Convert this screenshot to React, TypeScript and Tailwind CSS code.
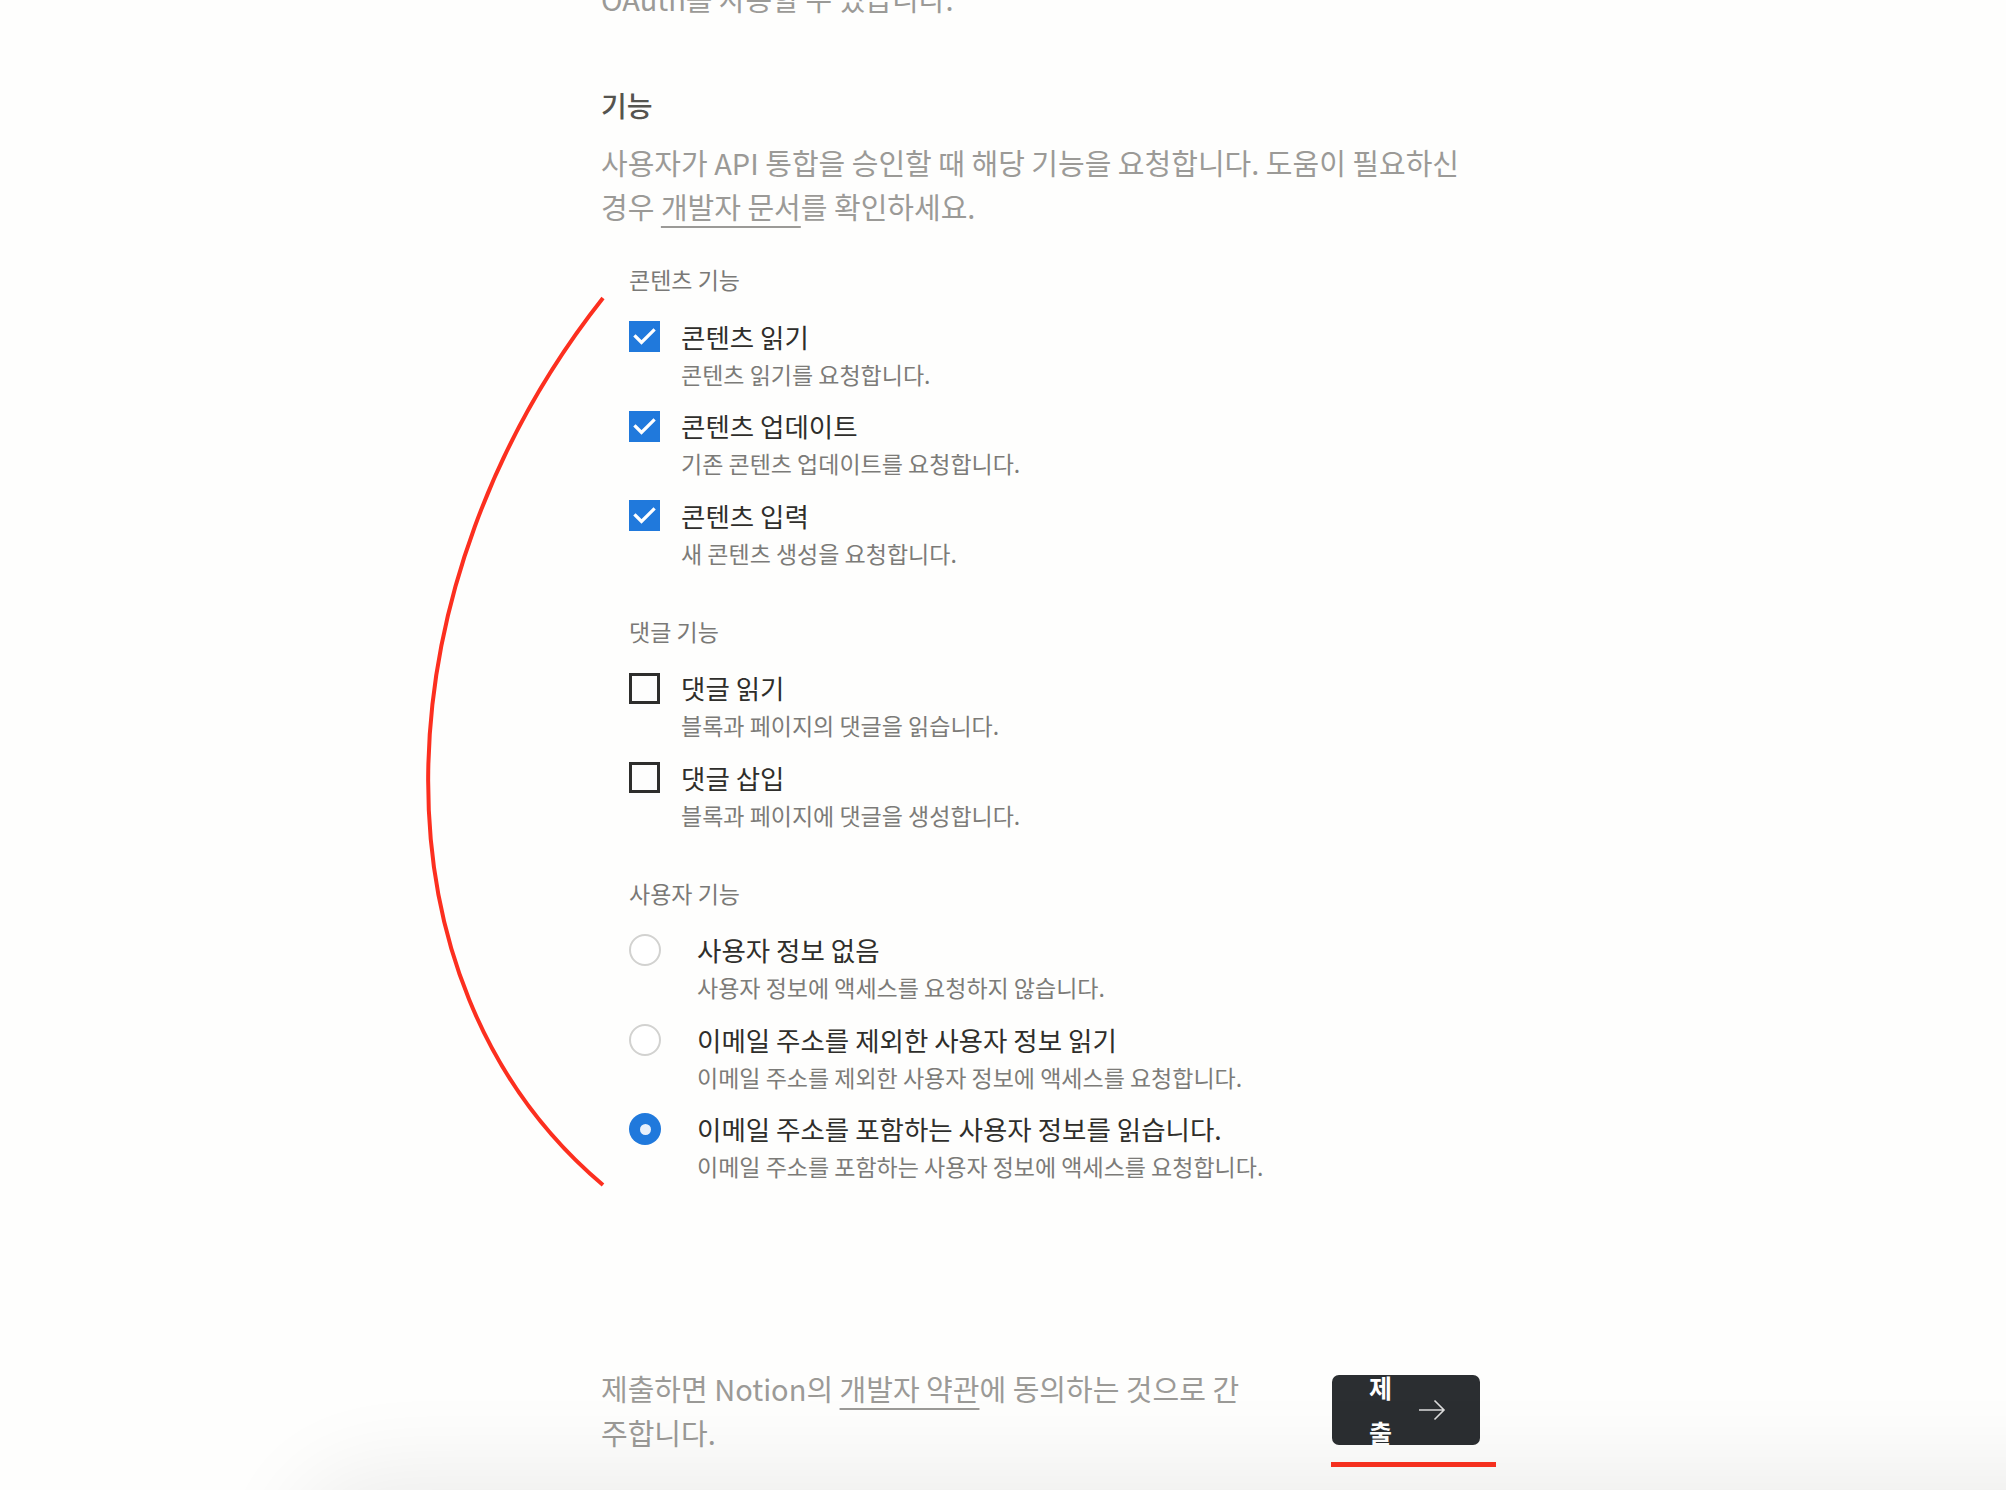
import React from 'react'

type Option = { label: string; desc: string; on: boolean }

const contentOptions: Option[] = [
  { label: '콘텐츠 읽기', desc: '콘텐츠 읽기를 요청합니다.', on: true },
  { label: '콘텐츠 업데이트', desc: '기존 콘텐츠 업데이트를 요청합니다.', on: true },
  { label: '콘텐츠 입력', desc: '새 콘텐츠 생성을 요청합니다.', on: true },
]

const commentOptions: Option[] = [
  { label: '댓글 읽기', desc: '블록과 페이지의 댓글을 읽습니다.', on: false },
  { label: '댓글 삽입', desc: '블록과 페이지에 댓글을 생성합니다.', on: false },
]

const userOptions: Option[] = [
  { label: '사용자 정보 없음', desc: '사용자 정보에 액세스를 요청하지 않습니다.', on: false },
  { label: '이메일 주소를 제외한 사용자 정보 읽기', desc: '이메일 주소를 제외한 사용자 정보에 액세스를 요청합니다.', on: false },
  { label: '이메일 주소를 포함하는 사용자 정보를 읽습니다.', desc: '이메일 주소를 포함하는 사용자 정보에 액세스를 요청합니다.', on: true },
]

function Checkbox({ on }: { on: boolean }) {
  if (on) {
    return (
      <div className="w-[31px] h-[31px] bg-[#2079dc] flex items-center justify-center">
        <svg width="31" height="31" viewBox="0 0 31 31" fill="none">
          <path d="M6.5 15.5 L12.5 21.5 L24.5 9.5" stroke="white" strokeWidth="3.2" strokeLinecap="square" />
        </svg>
      </div>
    )
  }
  return <div className="w-[31px] h-[31px] border-[3px] border-[#2e2e2c]" />
}

function Radio({ on }: { on: boolean }) {
  if (on) {
    return (
      <div className="w-[32px] h-[32px] rounded-full bg-[#2079dc] flex items-center justify-center">
        <div className="w-[11px] h-[11px] rounded-full bg-[#e8f0fb]" />
      </div>
    )
  }
  return <div className="w-[32px] h-[32px] rounded-full border-2 border-[#d2d2d0] bg-white" />
}

function Section({ title, options, kind, first }: { title: string; options: Option[]; kind: 'check' | 'radio'; first?: boolean }) {
  return (
    <div className={first ? '' : 'mt-[44px]'}>
      <div className="text-[23px] leading-[30px] text-[#7a7977]">{title}</div>
      <div className="mt-[24.5px] flex flex-col gap-[15.5px]">
        {options.map((o) => (
          <div key={o.label} className={kind === 'check' ? 'flex gap-[21px]' : 'flex gap-[36px]'}>
            <div className="h-[36px] flex items-center">
              {kind === 'check' ? <Checkbox on={o.on} /> : <Radio on={o.on} />}
            </div>
            <div>
              <div className="text-[26.5px] leading-[36px] text-[#2f2e2b]">{o.label}</div>
              <div className="text-[23px] leading-[38px] text-[#7c7b78]">{o.desc}</div>
            </div>
          </div>
        ))}
      </div>
    </div>
  )
}

export default function App() {
  return (
    <div className="relative w-full h-[1490px] overflow-hidden bg-[#fefefd] font-['Noto_Sans_CJK_KR',sans-serif]">
      <div className="ml-[601px] w-[879px] -mt-[24px]">
        <p className="text-[29px] leading-[44px] text-[#9b9a97]">OAuth를 사용할 수 있습니다.</p>

        <h2 className="mt-[67px] text-[28px] leading-[36px] font-medium text-[#55544f]">기능</h2>
        <p className="mt-[17px] break-keep text-[29px] leading-[44px] text-[#9b9a97]">
          사용자가 API 통합을 승인할 때 해당 기능을 요청합니다. 도움이 필요하신 경우{' '}
          <span className="underline decoration-[1.5px] underline-offset-[7px]">개발자 문서</span>를 확인하세요.
        </p>

        <div className="mt-[36px] pl-[28px]">
          <Section title="콘텐츠 기능" options={contentOptions} kind="check" first />
          <Section title="댓글 기능" options={commentOptions} kind="check" />
          <Section title="사용자 기능" options={userOptions} kind="radio" />
        </div>

        <div className="mt-[181px] flex items-center justify-between">
          <p className="w-[650px] text-[29px] leading-[44px] text-[#9b9a97]">
            제출하면 Notion의 <span className="underline decoration-[1.5px] underline-offset-[7px]">개발자 약관</span>에 동의하는 것으로 간주합니다.
          </p>
          <div className="relative">
            <button className="w-[148px] h-[70px] rounded-[7px] bg-[#2b2e31] overflow-hidden flex items-center pl-[37px] gap-[24px]">
              <span className="w-[25px] break-all text-[25px] leading-[45px] font-semibold text-white text-left">제출</span>
              <svg width="28" height="22" viewBox="0 0 28 22" fill="none">
                <path d="M1 11 H26 M16.5 1.5 L26 11 L16.5 20.5" stroke="#dcdcdc" strokeWidth="1.6" />
              </svg>
            </button>
            <div className="absolute left-[-1px] top-[87px] w-[165px] h-[5px] bg-[#fd3220]" />
          </div>
        </div>
      </div>

      <svg className="absolute left-0 top-0 pointer-events-none" width="700" height="1300" fill="none">
        <path d="M603 298 C380 580, 360 980, 603 1185" stroke="#fc2f1f" strokeWidth="4" />
      </svg>

      <div className="absolute left-[320px] right-[-200px] top-[1500px] h-[120px] rounded-full shadow-[0_0_90px_30px_rgba(0,0,0,0.07)]" />
    </div>
  )
}
